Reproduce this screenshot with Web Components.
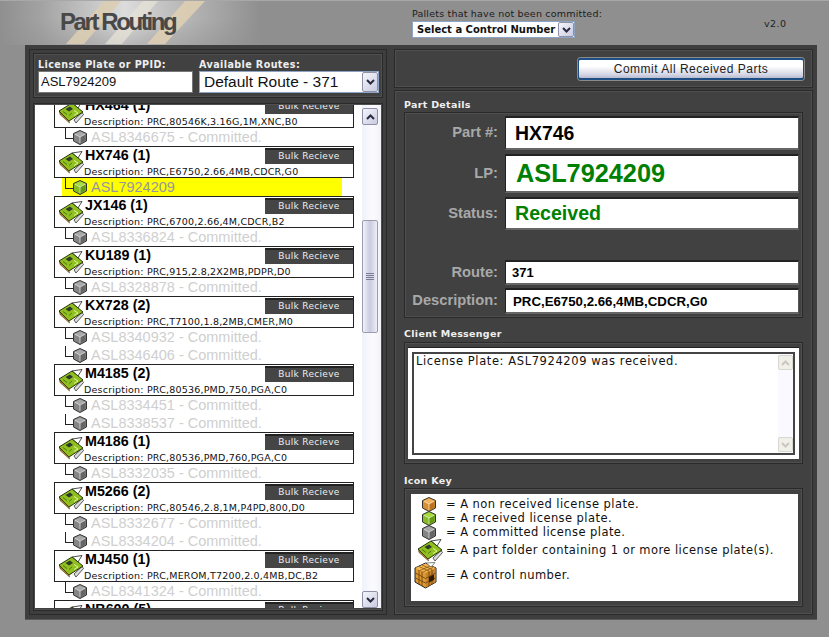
<!DOCTYPE html>
<html>
<head>
<meta charset="utf-8">
<title>Part Routing</title>
<style>
  html, body { margin: 0; padding: 0; background: #8f8f8f; }
  body { width: 829px; height: 637px; overflow: hidden; font-family: "DejaVu Sans", sans-serif; }
</style>
</head>
<body>
<part-routing></part-routing>
<script>
const ICONS = {
  orange: ['#f0b45a', '#d98f2e', '#b8741e'],
  green: ['#a8dc3c', '#86bd22', '#659a14'],
  gray: ['#a8a8a8', '#858585', '#666666']
};

class PlateCube extends HTMLElement {
  connectedCallback() {
    const c = ICONS[this.getAttribute('color') || 'gray'];
    this.attachShadow({ mode: 'open' });
    this.shadowRoot.innerHTML = `
      <style>:host { display: block; width: 14px; height: 15px; flex: none; } svg { display: block; }</style>
      <svg width="14" height="15" viewBox="0 0 14 15">
        <path d="M7 .5L13.500 3.500V11L7 14.500L.5 11V3.500Z" fill="${c[1]}" stroke="#333" stroke-width="1" stroke-linejoin="round"/>
        <path d="M7 1.500L12.500 4L7 6.800L1.500 4Z" fill="${c[0]}"/>
        <path d="M7 7L12.500 4.300V10.800L7 13.500Z" fill="${c[2]}"/>
        <path d="M2 4.300L7 7L12 4.300M7 7V13" fill="none" stroke="#fff" stroke-opacity=".6" stroke-width="1"/>
      </svg>`;
  }
}
customElements.define('plate-cube', PlateCube);

class PartCard extends HTMLElement {
  constructor() {
    super();
    this.attachShadow({ mode: 'open' });
    this.shadowRoot.innerHTML = `
      <style>:host { display: block; width: 26px; height: 24px; flex: none; } svg { display: block; }</style>
      <svg width="26" height="24" viewBox="0 0 26 24">
        <path d="M14 3L24 1.500L20 8Z" fill="#fff" stroke="#222" stroke-width=".8"/>
        <path d="M16 20L24 12.500L25.500 14.500L18 23Z" fill="#dcdcdc" stroke="#333" stroke-width=".8"/>
        <path d="M1 11L14 3L25 12L11 21Z" fill="#8fc020" stroke="#26330a" stroke-width="1" stroke-linejoin="round"/>
        <path d="M1.500 12L11 21L11.500 23L2 14.500Z" fill="#b58b2c" stroke="#3a2c0c" stroke-width=".5"/>
        <path d="M7.500 9L12 6.500L15 9L11 11.500Z" fill="#2f3a2a"/>
        <path d="M16 10.500L20 13L16 15.500" fill="none" stroke="#e4f49a" stroke-width="1"/>
        <path d="M5 11.500L9 14.500M11 15.500L14 13" fill="none" stroke="#4f7a0f" stroke-width="1"/>
      </svg>`;
  }
}
customElements.define('part-card', PartCard);

class ControlCrate extends HTMLElement {
  constructor() {
    super();
    this.attachShadow({ mode: 'open' });
    this.shadowRoot.innerHTML = `
      <style>:host { display: block; width: 23px; height: 27px; flex: none; } svg { display: block; }</style>
      <svg width="23" height="27" viewBox="0 0 23 27">
        <path d="M11.500 1L22 6V20L11.500 26L1 20V6Z" fill="#e09a34" stroke="#222" stroke-width="1" stroke-linejoin="round"/>
        <path d="M11.500 1.500L21.500 6L11.500 11L1.500 6Z" fill="#f2b850"/>
        <path d="M11.500 11L21.500 6V20L11.500 25.500Z" fill="#c9842a"/>
        <path d="M5 4.500L15 9M8 3L18 7.500M6 8.500L16 4M9 10L19 5.500" stroke="#8a5614" stroke-width=".8" fill="none"/>
        <path d="M5 8V22.500M8 9.500V24M15 9.500V24M18 8V22.500M1.500 11L11.500 16.500L21.500 11M1.500 16L11.500 21L21.500 16" stroke="#6e4610" stroke-width=".9" fill="none"/>
        <path d="M15 15L20 12.500V18L15 20.500Z" fill="#2c1c08"/>
        <path d="M12 1L21 .5L17 5Z" fill="#fff" stroke="#333" stroke-width=".6"/>
      </svg>`;
  }
}
customElements.define('control-crate', ControlCrate);

class ScrollArrow extends HTMLElement {
  connectedCallback() {
    const up = this.getAttribute('dir') === 'up';
    const faded = this.hasAttribute('faded');
    this.attachShadow({ mode: 'open' });
    this.shadowRoot.innerHTML = `
      <style>
        :host { display: flex; align-items: center; justify-content: center; flex: none;
          box-sizing: border-box; width: 100%; height: var(--arrow-h, 17px);
          border: 1px solid ${faded ? '#d8d8d0' : '#8f90a8'}; border-radius: 2px;
          background: ${faded ? '#f0f0e8' : 'linear-gradient(135deg,#f6f6fb,#c9cbe0)'}; }
        svg { display: block; }
      </style>
      <svg width="9" height="6" viewBox="0 0 9 6">
        <path d="${up ? 'M1 5L4.500 1.500L8 5' : 'M1 1L4.500 4.500L8 1'}" fill="none" stroke="${faded ? '#c8c8c0' : '#2a2a40'}" stroke-width="2"/>
      </svg>`;
  }
}
customElements.define('scroll-arrow', ScrollArrow);

class ListScrollbar extends HTMLElement {
  constructor() {
    super();
    this.attachShadow({ mode: 'open' });
    this.shadowRoot.innerHTML = `
      <style>
        :host { display: flex; flex-direction: column; flex: none; box-sizing: border-box;
          width: 19px; padding: 3px 3px 0 0;
          background: linear-gradient(90deg,#f1f1fa,#fbfbff 60%,#f1f1f8); }
        .thumb { box-sizing: border-box; height: 113px; margin-top: 95px; border: 1px solid #9a9bb0;
          border-radius: 2px; background: linear-gradient(90deg,#f2f2f8,#c9cbdf 50%,#eeeef6);
          display: flex; align-items: center; justify-content: center; }
        .grip { width: 8px; height: 8px;
          background: repeating-linear-gradient(180deg,#7c7d94 0 1px,transparent 1px 2px); }
        .fill { flex: 1; }
      </style>
      <scroll-arrow dir="up"></scroll-arrow>
      <div class="thumb"><div class="grip"></div></div>
      <div class="fill"></div>
      <scroll-arrow dir="down"></scroll-arrow>`;
  }
}
customElements.define('list-scrollbar', ListScrollbar);

class ComboBox extends HTMLElement {
  constructor() {
    super();
    this.attachShadow({ mode: 'open' });
    this.shadowRoot.innerHTML = `
      <style>
        :host { display: flex; box-sizing: border-box; background: #fff; border: 1px solid #8ea4c4;
          align-items: center; overflow: hidden; }
        .text { flex: 1; min-width: 0; overflow: hidden; white-space: nowrap; }
        .btn { flex: none; width: 16px; align-self: stretch; display: flex; }
        scroll-arrow { height: auto; }
      </style>
      <div class="text"><slot></slot></div>
      <div class="btn"><scroll-arrow dir="down"></scroll-arrow></div>`;
  }
}
customElements.define('combo-box', ComboBox);

class AppHeader extends HTMLElement {
  constructor() {
    super();
    this.attachShadow({ mode: 'open' });
    this.shadowRoot.innerHTML = `
      <style>
        :host { display: flex; height: 45px; box-sizing: border-box; border-top: 1px solid #a8a8a8;
          font-family: "DejaVu Sans", sans-serif; overflow: hidden;
          background:
            linear-gradient(180deg, rgba(143,143,143,0) 40%, rgba(143,143,143,.45) 100%),
            linear-gradient(90deg, #8f8f8f 0, #a2a2a2 40px, #dcdcdc 125px, #c2c2c2 165px, #8f8f8f 260px); }
        .logo { flex: none; width: 412px; height: 44px; position: relative; }
        .logo svg { display: block; position: absolute; left: 0; top: 0; }
        h1 { position: absolute; left: 60px; top: 7px; margin: 0; font: bold 24px "Liberation Sans", sans-serif;
          letter-spacing: -2.4px; color: #484848; }
        .pallets { flex: none; width: 352px; padding-top: 7px; font-size: 9.5px; letter-spacing: .2px; color: #1c1c1c; }
        .label { line-height: 11px; height: 13px; white-space: nowrap; }
        combo-box { width: 163px; height: 17px; font-weight: bold; font-size: 10px; color: #111; padding-left: 4px; letter-spacing: 0; }
        .ver { font-size: 9.5px; letter-spacing: .4px; padding-top: 17px; color: #222; }
      </style>
      <div class="logo">
        <svg width="412" height="44" viewBox="0 0 412 44">
          <path d="M66 43L104 0H121L84 43Z" fill="#dccdb2" opacity=".9"/>
          <path d="M105 43L143 0H158L122 43Z" fill="#e6e2d6" opacity=".75"/>
          <path d="M147 43L185 0H205L165 43Z" fill="#dccdb2" opacity=".95"/>
        </svg>
        <h1>Part Routing</h1>
      </div>
      <div class="pallets">
        <div class="label">Pallets that have not been committed:</div>
        <combo-box>Select a Control Number</combo-box>
      </div>
      <div class="ver">v2.0</div>`;
  }
}
customElements.define('app-header', AppHeader);

class DarkPanel extends HTMLElement {
  constructor() {
    super();
    this.attachShadow({ mode: 'open' });
    this.shadowRoot.innerHTML = `
      <style>
        :host { display: block; box-sizing: border-box; background: #414141; border: 1px solid #2a2a2a;
          box-shadow: inset 0 0 0 1px #4f4f4f; }
      </style>
      <slot></slot>`;
  }
}
customElements.define('dark-panel', DarkPanel);

class PlateRow extends HTMLElement {
  connectedCallback() {
    const received = this.hasAttribute('received');
    const lp = this.getAttribute('lp');
    this.attachShadow({ mode: 'open' });
    this.shadowRoot.innerHTML = `
      <style>
        :host { display: flex; height: 18px; margin-left: 8px; width: 280px; padding-left: 3px; box-sizing: border-box;
          background: ${received ? '#ffff00' : 'transparent'}; }
        .tie { flex: none; box-sizing: border-box; width: 8px; height: 11px; border-left: 1px solid #222; border-bottom: 1px solid #222; }
        plate-cube { margin-top: 2px; }
        .txt { padding-left: 4px; font: 14.5px/18px "Liberation Sans", sans-serif; color: ${received ? '#9696a0' : '#cfcfcf'}; white-space: nowrap; }
      </style>
      <div class="tie"></div>
      <plate-cube color="${received ? 'green' : 'gray'}"></plate-cube>
      <div class="txt">${lp}${received ? '' : ' - Committed.'}</div>`;
  }
}
customElements.define('plate-row', PlateRow);

class PartFolder extends HTMLElement {
  connectedCallback() {
    this.attachShadow({ mode: 'open' });
    this.shadowRoot.innerHTML = `
      <style>
        :host { display: block; }
        .box { box-sizing: border-box; width: 300px; height: 32px; border: 1px solid #222; background: #fff; }
        .top { display: flex; height: 17px; }
        part-card { margin: 3px 0 0 3px; position: relative; }
        .name { flex: 1; padding-left: 1px; font: bold 14.3px/17px "Liberation Sans", sans-serif; color: #000; white-space: nowrap; }
        .bulk { flex: none; box-sizing: border-box; width: 88px; height: 16px; margin-top: 1px; border-top: 2px solid #222;
          background: #454545; color: #eee; font: 9px/13px "DejaVu Sans", sans-serif; letter-spacing: .3px; text-align: center; }
        .desc { padding: 1px 0 0 29px; font: 9.5px/13px "DejaVu Sans", sans-serif; letter-spacing: .2px; color: #111; white-space: nowrap; }
      </style>
      <div class="box">
        <div class="top">
          <part-card></part-card>
          <div class="name">${this.getAttribute('part')} (${this.getAttribute('count')})</div>
          <div class="bulk">Bulk Recieve</div>
        </div>
        <div class="desc">Description: ${this.getAttribute('desc')}</div>
      </div>
      <slot></slot>`;
  }
}
customElements.define('part-folder', PartFolder);

class PartList extends HTMLElement {
  constructor() {
    super();
    this.attachShadow({ mode: 'open' });
    this.shadowRoot.innerHTML = `
      <style>
        :host { display: flex; height: 503px; margin: 1px 1px 0 1px; background: #fff; overflow: hidden; }
        .rows { flex: 1; overflow: hidden; padding-left: 19px; }
        .inner { margin-top: -9px; }
      </style>
      <div class="rows"><div class="inner"><slot></slot></div></div>
      <list-scrollbar></list-scrollbar>`;
  }
}
customElements.define('part-list', PartList);

class LookupBar extends HTMLElement {
  constructor() {
    super();
    this.attachShadow({ mode: 'open' });
    this.shadowRoot.innerHTML = `
      <style>
        :host { display: flex; gap: 6px; padding: 4px 4px 0 4px; height: 43px; box-sizing: border-box; }
        .col { display: flex; flex-direction: column; }
        label { font: bold 9.6px/13px "DejaVu Sans", sans-serif; letter-spacing: .4px; color: #eee; white-space: nowrap; }
        .lp { box-sizing: border-box; width: 155px; height: 22px; background: #fff; border: 1px solid #777;
          padding-left: 2px; font: 13px/20px "Liberation Sans", sans-serif; color: #111; }
        combo-box { width: 180px; height: 22px; padding-left: 4px; font: 15.500px "Liberation Sans", sans-serif; color: #111; }
      </style>
      <div class="col"><label>License Plate or PPID:</label><div class="lp">ASL7924209</div></div>
      <div class="col"><label>Available Routes:</label><combo-box>Default Route - 371</combo-box></div>`;
  }
}
customElements.define('lookup-bar', LookupBar);

class DetailField extends HTMLElement {
  connectedCallback() {
    const size = this.getAttribute('size');
    const color = this.getAttribute('color') || '#000';
    const pad = this.getAttribute('pad') || '9';
    this.attachShadow({ mode: 'open' });
    this.shadowRoot.innerHTML = `
      <style>
        :host { display: flex; align-items: stretch; box-sizing: border-box; height: ${this.getAttribute('h')}px; }
        .lab { flex: none; box-sizing: border-box; width: 100px; padding: 0 7px 2px 0; align-self: center; text-align: right;
          font: bold 14.7px "Liberation Sans", sans-serif; color: #a9a9a9; white-space: nowrap; }
        .val { flex: none; box-sizing: border-box; width: 294px; background: #fff; border-top: 2px solid #222; border-left: 1px solid #222;
          border-bottom: 2px solid #666; border-right: 1px solid #555; padding-left: ${pad}px;
          display: flex; align-items: center; font: bold ${size}px "Liberation Sans", sans-serif; color: ${color}; white-space: nowrap; }
      </style>
      <div class="lab">${this.getAttribute('label')}</div>
      <div class="val">${this.getAttribute('value')}</div>`;
  }
}
customElements.define('detail-field', DetailField);

class SectionTitle extends HTMLElement {
  constructor() {
    super();
    this.attachShadow({ mode: 'open' });
    this.shadowRoot.innerHTML = `
      <style>
        :host { display: block; margin-left: 9px; font: bold 9.5px/12px "DejaVu Sans", sans-serif; letter-spacing: .3px; color: #f0f0f0; }
      </style>
      <slot></slot>`;
  }
}
customElements.define('section-title', SectionTitle);

class PartDetails extends HTMLElement {
  constructor() {
    super();
    this.attachShadow({ mode: 'open' });
    this.shadowRoot.innerHTML = `
      <style>
        :host { display: block; padding-top: 8px; }
        dark-panel { margin: 1px 9px 0 9px; height: 206px; padding-top: 3px; }
        .rows { display: flex; flex-direction: column; }
      </style>
      <section-title>Part Details</section-title>
      <dark-panel>
        <div class="rows">
          <detail-field style="margin-bottom:4px" h="34" label="Part #:" value="HX746" size="19.400"></detail-field>
          <detail-field style="margin-bottom:4px" h="39" label="LP:" value="ASL7924209" size="25.300" pad="10" color="#007f00"></detail-field>
          <detail-field style="margin-bottom:30px" h="33" label="Status:" value="Received" size="19.600" color="#007f00"></detail-field>
          <detail-field style="margin-bottom:3px" h="25" label="Route:" value="371" size="13" pad="6"></detail-field>
          <detail-field h="26" label="Description:" value="PRC,E6750,2.66,4MB,CDCR,G0" size="13.250" pad="7"></detail-field>
        </div>
      </dark-panel>`;
  }
}
customElements.define('part-details', PartDetails);

class ClientMessenger extends HTMLElement {
  constructor() {
    super();
    this.attachShadow({ mode: 'open' });
    this.shadowRoot.innerHTML = `
      <style>
        :host { display: block; margin-top: 10px; }
        dark-panel { margin: 2px 9px 0 9px; height: 122px; padding: 4px 3px; }
        .white { height: 112px; box-sizing: border-box; background: #fff; padding: 4px; border-top: 1px solid #222; }
        .msg { display: flex; height: 103px; box-sizing: border-box; border: 2px solid #444; }
        .txt { flex: 1; padding: 1px 0 0 2px; font: 11.500px/13px "DejaVu Sans", sans-serif; letter-spacing: .6px; color: #111; }
        .bar { flex: none; width: 15px; display: flex; flex-direction: column; justify-content: space-between;
          padding: 1px 0; background: #f9f9ff; --arrow-h: 15px; }
      </style>
      <section-title>Client Messenger</section-title>
      <dark-panel>
        <div class="white">
          <div class="msg">
            <div class="txt">License Plate: ASL7924209 was received.</div>
            <div class="bar"><scroll-arrow dir="up" faded></scroll-arrow><scroll-arrow dir="down" faded></scroll-arrow></div>
          </div>
        </div>
      </dark-panel>`;
  }
}
customElements.define('client-messenger', ClientMessenger);

class KeyRow extends HTMLElement {
  connectedCallback() {
    this.attachShadow({ mode: 'open' });
    this.shadowRoot.innerHTML = `
      <style>
        :host { display: flex; align-items: center; height: ${this.getAttribute('h') || 14}px;
          font: 11.500px "DejaVu Sans", sans-serif; letter-spacing: .43px; color: #111; white-space: nowrap; }
        .ic { flex: none; width: 35px; display: flex; padding-left: ${this.getAttribute('ind')}px; box-sizing: border-box; }
      </style>
      <div class="ic"><slot name="icon"></slot></div>
      <div><slot></slot></div>`;
  }
}
customElements.define('key-row', KeyRow);

class IconKey extends HTMLElement {
  constructor() {
    super();
    this.attachShadow({ mode: 'open' });
    this.shadowRoot.innerHTML = `
      <style>
        :host { display: block; margin-top: 11px; }
        dark-panel { margin: 1px 9px 0 9px; height: 119px; padding: 5px 4px 0 6px; }
        .white { height: 107px; box-sizing: border-box; background: #fff; padding-top: 3px; }
      </style>
      <section-title>Icon Key</section-title>
      <dark-panel>
        <div class="white">
          <key-row ind="11"><plate-cube slot="icon" color="orange"></plate-cube>= A non received license plate.</key-row>
          <key-row ind="11"><plate-cube slot="icon" color="green"></plate-cube>= A received license plate.</key-row>
          <key-row ind="11"><plate-cube slot="icon" color="gray"></plate-cube>= A committed license plate.</key-row>
          <key-row ind="6" h="22"><part-card slot="icon"></part-card>= A part folder containing 1 or more license plate(s).</key-row>
          <key-row ind="3" h="28"><control-crate slot="icon"></control-crate>= A control number.</key-row>
        </div>
      </dark-panel>`;
  }
}
customElements.define('icon-key', IconKey);

class PartRouting extends HTMLElement {
  constructor() {
    super();
    this.attachShadow({ mode: 'open' });
    this.shadowRoot.innerHTML = `
      <style>
        :host { display: block; width: 829px; height: 637px; }
        .frame { margin-left: 25px; box-sizing: border-box; width: 792px; height: 575px; padding: 4px;
          background: #3e3e3e; display: grid; grid-template-columns: 358px 419px; column-gap: 7px;
          border-bottom: 1px solid #5a5a5a; }
        .left { box-sizing: border-box; border: 1px solid #2a2a2a; padding: 3px; display: flex; flex-direction: column; gap: 5px; height: 566px; }
        .right { display: flex; flex-direction: column; gap: 2px; }
        .commit-wrap { height: 37px; display: flex; justify-content: flex-end; align-items: flex-start; padding: 8px 8px 0 0; box-sizing: border-box; }
        .commit { box-sizing: border-box; width: 226px; height: 22px; border: 2px solid #1d4f86; border-left-width: 1px; border-right-width: 1px; border-radius: 3px;
          background: linear-gradient(180deg,#fff 35%,#d5d6e6 80%,#b9bbd0); color: #222; box-shadow: 0 0 0 1px #8a8a8a;
          font: 12px/18px "Liberation Sans", sans-serif; letter-spacing: .5px; text-align: center; }
        .list-panel { height: 508px; }
        .detail-panel { flex: 1; }
      </style>
      <app-header></app-header>
      <div class="frame">
        <div class="left">
          <dark-panel><lookup-bar></lookup-bar></dark-panel>
          <dark-panel class="list-panel">
            <part-list>
              <part-folder part="HX464" count="1" desc="PRC,80546K,3.16G,1M,XNC,B0"><plate-row lp="ASL8346675"></plate-row></part-folder>
              <part-folder part="HX746" count="1" desc="PRC,E6750,2.66,4MB,CDCR,G0"><plate-row lp="ASL7924209" received></plate-row></part-folder>
              <part-folder part="JX146" count="1" desc="PRC,6700,2.66,4M,CDCR,B2"><plate-row lp="ASL8336824"></plate-row></part-folder>
              <part-folder part="KU189" count="1" desc="PRC,915,2.8,2X2MB,PDPR,D0"><plate-row lp="ASL8328878"></plate-row></part-folder>
              <part-folder part="KX728" count="2" desc="PRC,T7100,1.8,2MB,CMER,M0"><plate-row lp="ASL8340932"></plate-row><plate-row lp="ASL8346406"></plate-row></part-folder>
              <part-folder part="M4185" count="2" desc="PRC,80536,PMD,750,PGA,C0"><plate-row lp="ASL8334451"></plate-row><plate-row lp="ASL8338537"></plate-row></part-folder>
              <part-folder part="M4186" count="1" desc="PRC,80536,PMD,760,PGA,C0"><plate-row lp="ASL8332035"></plate-row></part-folder>
              <part-folder part="M5266" count="2" desc="PRC,80546,2.8,1M,P4PD,800,D0"><plate-row lp="ASL8332677"></plate-row><plate-row lp="ASL8334204"></plate-row></part-folder>
              <part-folder part="MJ450" count="1" desc="PRC,MEROM,T7200,2.0,4MB,DC,B2"><plate-row lp="ASL8341324"></plate-row></part-folder>
              <part-folder part="NB600" count="5" desc="PRC"></part-folder>
            </part-list>
          </dark-panel>
        </div>
        <div class="right">
          <dark-panel><div class="commit-wrap"><div class="commit">Commit All Received Parts</div></div></dark-panel>
          <dark-panel class="detail-panel">
            <part-details></part-details>
            <client-messenger></client-messenger>
            <icon-key></icon-key>
          </dark-panel>
        </div>
      </div>`;
  }
}
customElements.define('part-routing', PartRouting);
</script>
</body>
</html>
